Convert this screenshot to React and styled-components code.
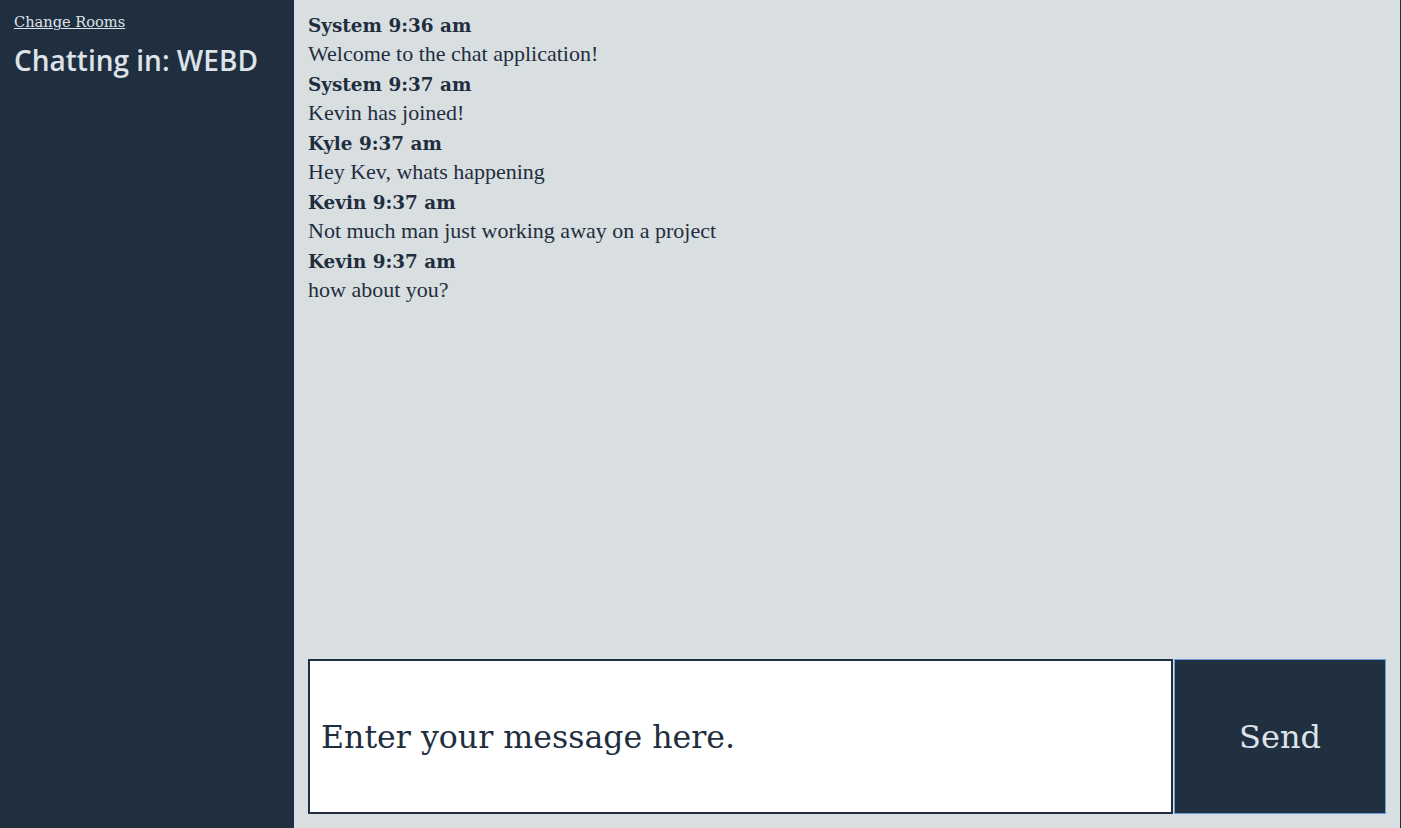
import React from "react";
import styled, { createGlobalStyle } from "styled-components";

const messages = [
  { user: "System", time: "9:36 am", text: "Welcome to the chat application!" },
  { user: "System", time: "9:37 am", text: "Kevin has joined!" },
  { user: "Kyle", time: "9:37 am", text: "Hey Kev, whats happening" },
  { user: "Kevin", time: "9:37 am", text: "Not much man just working away on a project" },
  { user: "Kevin", time: "9:37 am", text: "how about you?" }
];

const GlobalStyle = createGlobalStyle`
  html, body {
    margin: 0;
    padding: 0;
    height: 100%;
  }
  body {
    font-family: "Liberation Serif", serif;
    color: #1f2e3e;
  }
`;

const Layout = styled.div`
  display: grid;
  grid-template-columns: 294px 1fr;
  height: 100vh;
  overflow: hidden;
`;

const Sidebar = styled.aside`
  background: #202f3f;
  color: #dde3e8;
  padding: 11px 14px;
  display: flex;
  flex-direction: column;
  gap: 8px;
`;

const RoomLink = styled.a`
  font-family: "DejaVu Serif", serif;
  font-size: 14.6px;
  color: #dde3e8;
  text-decoration: underline;
  line-height: 22px;
  cursor: pointer;
`;

const RoomTitle = styled.h2`
  margin: 0;
  font-family: "Open Sans", sans-serif;
  font-weight: 600;
  font-size: 28px;
  line-height: 38px;
  color: #dde3e8;
`;

const Main = styled.main`
  background: #d9dee1;
  border-right: 1px solid #202f3f;
  display: flex;
  flex-direction: column;
  padding: 11px 14px 14px;
  min-height: 0;
`;

const MessageList = styled.div`
  flex: 1;
  overflow-y: auto;
`;

const Message = styled.div`
  display: flex;
  flex-direction: column;
`;

const Meta = styled.div`
  font-family: "DejaVu Serif", serif;
  font-weight: bold;
  font-size: 18.4px;
  line-height: 29.5px;
  color: #1f2e3e;
`;

const Body = styled.div`
  font-family: "Liberation Serif", serif;
  font-size: 22px;
  line-height: 29.5px;
  margin: -2px 0 2px;
  color: #1f2e3e;
`;

const Composer = styled.form`
  display: flex;
  gap: 1px;
  height: 155px;
`;

const MessageInput = styled.input`
  flex: 1;
  box-sizing: border-box;
  border: 2px solid #202f3f;
  background: #fff;
  padding: 0 11px;
  font-family: "DejaVu Serif", serif;
  font-size: 31.6px;
  color: #1f2e3e;
  outline: none;
  &::placeholder {
    color: #1f2e3e;
    opacity: 1;
  }
`;

const SendButton = styled.button`
  width: 212px;
  box-sizing: border-box;
  background: #213040;
  border: 1px solid #6d9ce0;
  color: #dde3e8;
  font-family: "DejaVu Serif", serif;
  font-size: 32px;
  cursor: pointer;
`;

export default function App() {
  return (
    <>
      <GlobalStyle />
      <Layout>
        <Sidebar>
          <RoomLink>Change Rooms</RoomLink>
          <RoomTitle>Chatting in: WEBD</RoomTitle>
        </Sidebar>
        <Main>
          <MessageList>
            {messages.map((m, i) => (
              <Message key={i}>
                <Meta>
                  {m.user} {m.time}
                </Meta>
                <Body>{m.text}</Body>
              </Message>
            ))}
          </MessageList>
          <Composer onSubmit={e => e.preventDefault()}>
            <MessageInput placeholder="Enter your message here." />
            <SendButton type="submit">Send</SendButton>
          </Composer>
        </Main>
      </Layout>
    </>
  );
}
